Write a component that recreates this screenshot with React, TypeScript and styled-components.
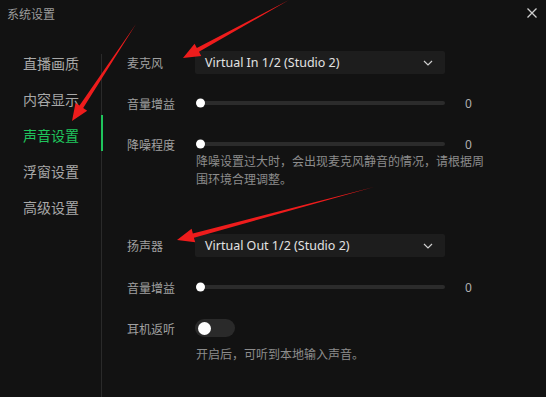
import { FC } from "react"
import styled, { createGlobalStyle } from "styled-components"

const GlobalStyle = createGlobalStyle`
  html, body {
    margin: 0;
    padding: 0;
    background: #121212;
  }
  body {
    font-family: "Noto Sans CJK SC", "Noto Sans", sans-serif;
  }
`

const StyledWindow = styled.div`
  position: relative;
  width: 546px;
  height: 397px;
  background: #121212;
  overflow: hidden;
  display: flex;
  flex-direction: column;
`

const StyledTitleBar = styled.div`
  height: 28px;
  display: flex;
  align-items: center;
  justify-content: space-between;
  padding: 0 6px 0 7px;
`

const StyledTitle = styled.span`
  font-size: 12px;
  color: #9c9c9c;
  line-height: 1;
`

const StyledClose = styled.button`
  display: flex;
  width: 16px;
  height: 16px;
  align-items: center;
  justify-content: center;
  padding: 0;
  margin-top: -2px;
  background: transparent;
  border: none;
  color: #d0d0d0;
`

const StyledBody = styled.div`
  flex: 1;
  display: flex;
  padding-top: 17px;
`

const StyledNav = styled.nav`
  width: 101px;
  display: flex;
  flex-direction: column;
`

const StyledNavItem = styled.div<{ $active?: boolean }>`
  position: relative;
  height: 36px;
  padding-left: 23px;
  display: flex;
  align-items: center;
  font-size: 14px;
  color: ${(p) => (p.$active ? "#1fc45c" : "#a8a8a8")};

  &::after {
    content: "";
    display: ${(p) => (p.$active ? "block" : "none")};
    position: absolute;
    right: -2px;
    top: -2px;
    width: 2px;
    height: 36px;
    background: #1fc45c;
  }
`

const StyledDivider = styled.div`
  width: 1px;
  margin-top: 9px;
  background: #2a2a2a;
`

const StyledContent = styled.div`
  flex: 1;
  display: flex;
  flex-direction: column;
  padding-left: 25px;
  padding-top: 6px;
`

const StyledRow = styled.div<{ $height: number; $gap: number }>`
  display: flex;
  align-items: center;
  height: ${(p) => p.$height}px;
  margin-top: ${(p) => p.$gap}px;
`

const StyledLabel = styled.span`
  width: 68px;
  flex-shrink: 0;
  font-size: 12px;
  color: #a0a0a0;
`

const StyledSelect = styled.div`
  width: 250px;
  height: 23px;
  box-sizing: border-box;
  display: flex;
  align-items: center;
  justify-content: space-between;
  padding: 0 12px 0 10px;
  background: #1d1d1d;
  border-radius: 2px;
  font-family: "Noto Sans", "Noto Sans CJK SC", sans-serif;
  font-size: 12.5px;
  color: #e2e2e2;
`

const StyledTrack = styled.div`
  position: relative;
  width: 248px;
  height: 4px;
  margin-left: 2px;
  background: #2b2b2b;
  border-radius: 2px;
`

const StyledThumb = styled.span`
  position: absolute;
  left: -1px;
  top: 50%;
  width: 9px;
  height: 9px;
  transform: translateY(-50%);
  background: #ffffff;
  border-radius: 50%;
`

const StyledValue = styled.span`
  margin-left: 20px;
  font-family: "Noto Sans", sans-serif;
  font-size: 12px;
  color: #b0b0b0;
`

const StyledNote = styled.p<{ $gap: number }>`
  margin: ${(p) => p.$gap}px 0 0 69px;
  width: 292px;
  font-size: 12px;
  line-height: 18px;
  color: #8c8c8c;
`

const StyledToggle = styled.div`
  width: 40px;
  height: 18px;
  border-radius: 9px;
  background: #2a2a2a;
  display: flex;
  align-items: center;
  padding-left: 3px;
  box-sizing: border-box;
`

const StyledKnob = styled.span`
  width: 13px;
  height: 13px;
  border-radius: 50%;
  background: #ffffff;
`

const StyledOverlay = styled.svg`
  position: absolute;
  inset: 0;
  pointer-events: none;
`

const Chevron: FC = () => (
  <svg width='10' height='6' viewBox='0 0 10 6'>
    <path d='M1 1 L5 5 L9 1' fill='none' stroke='#cfcfcf' strokeWidth='1.2' />
  </svg>
)

const Slider: FC<{ value: number }> = ({ value }) => (
  <>
    <StyledTrack>
      <StyledThumb />
    </StyledTrack>
    <StyledValue>{value}</StyledValue>
  </>
)

// red annotation arrow, thin at the tail and widening towards the head
const arrowPoints = (tx: number, ty: number, hx: number, hy: number) => {
  const dx = hx - tx
  const dy = hy - ty
  const len = Math.hypot(dx, dy)
  const ux = dx / len
  const uy = dy / len
  const nx = -uy
  const ny = ux
  const headLen = 17
  const headW = 7
  const shaftW = 2.2
  const bx = hx - ux * headLen
  const by = hy - uy * headLen
  const pts = [
    [tx, ty],
    [bx + nx * shaftW, by + ny * shaftW],
    [bx + nx * headW, by + ny * headW],
    [hx, hy],
    [bx - nx * headW, by - ny * headW],
    [bx - nx * shaftW, by - ny * shaftW],
  ]
  return pts.map((p) => p.join(",")).join(" ")
}

const arrows = [
  [289, 0, 183, 58],
  [136, 24, 72, 121],
  [374, 187, 177, 240],
]

const navItems = ["直播画质", "内容显示", "声音设置", "浮窗设置", "高级设置"]

const App: FC = () => {
  return (
    <StyledWindow>
      <GlobalStyle />
      <StyledTitleBar>
        <StyledTitle>系统设置</StyledTitle>
        <StyledClose type='button'>
          <svg width='10' height='10' viewBox='0 0 10 10'>
            <path d='M0.5 0.5 L9.5 9.5 M9.5 0.5 L0.5 9.5' stroke='currentColor' strokeWidth='1.3' />
          </svg>
        </StyledClose>
      </StyledTitleBar>
      <StyledBody>
        <StyledNav>
          {navItems.map((item) => (
            <StyledNavItem key={item} $active={item === "声音设置"}>
              {item}
            </StyledNavItem>
          ))}
        </StyledNav>
        <StyledDivider />
        <StyledContent>
          <StyledRow $height={23} $gap={0}>
            <StyledLabel>麦克风</StyledLabel>
            <StyledSelect>
              Virtual In 1/2 (Studio 2)
              <Chevron />
            </StyledSelect>
          </StyledRow>
          <StyledRow $height={18} $gap={20}>
            <StyledLabel>音量增益</StyledLabel>
            <Slider value={0} />
          </StyledRow>
          <StyledRow $height={16} $gap={24}>
            <StyledLabel>降噪程度</StyledLabel>
            <Slider value={0} />
          </StyledRow>
          <StyledNote $gap={0}>
            降噪设置过大时，会出现麦克风静音的情况，请根据周围环境合理调整。
          </StyledNote>
          <StyledRow $height={23} $gap={46}>
            <StyledLabel>扬声器</StyledLabel>
            <StyledSelect>
              Virtual Out 1/2 (Studio 2)
              <Chevron />
            </StyledSelect>
          </StyledRow>
          <StyledRow $height={18} $gap={21}>
            <StyledLabel>音量增益</StyledLabel>
            <Slider value={0} />
          </StyledRow>
          <StyledRow $height={18} $gap={23}>
            <StyledLabel>耳机返听</StyledLabel>
            <StyledToggle>
              <StyledKnob />
            </StyledToggle>
          </StyledRow>
          <StyledNote $gap={8}>开启后，可听到本地输入声音。</StyledNote>
        </StyledContent>
      </StyledBody>
      <StyledOverlay width='546' height='397' viewBox='0 0 546 397'>
        {arrows.map(([tx, ty, hx, hy], i) => (
          <polygon key={i} points={arrowPoints(tx, ty, hx, hy)} fill='#ee1c1c' />
        ))}
      </StyledOverlay>
    </StyledWindow>
  )
}

export default App
